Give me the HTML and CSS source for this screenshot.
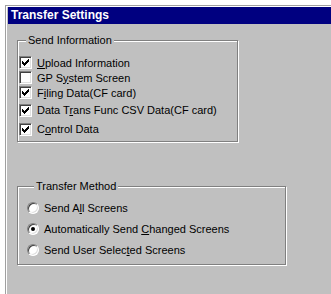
FILE: index.html
```html
<!doctype html>
<html>

<head>
   <meta charset="utf-8">
   <title>Transfer Settings</title>
   <link rel="stylesheet" href="styles.css">
</head>

<body>

   <div class="window">
      <div class="titleBar">Transfer Settings</div>

      <fieldset class="group sendInfo">
         <legend>Send Information</legend>
         <div class="checkRow">
            <span class="check on"><svg width="7" height="7" viewBox="0 0 7 7"><path d="M6 0h1v1h-1zM5 1h2v1h-2zM0 2h1v1h-1zM4 2h3v1h-3zM0 3h2v1h-2zM3 3h3v1h-3zM0 4h5v1h-5zM1 5h3v1h-3zM2 6h1v1h-1z"/></svg></span>
            <span><u>U</u>pload Information</span>
         </div>
         <div class="checkRow">
            <span class="check"></span>
            <span>GP S<u>y</u>stem Screen</span>
         </div>
         <div class="checkRow">
            <span class="check on"><svg width="7" height="7" viewBox="0 0 7 7"><path d="M6 0h1v1h-1zM5 1h2v1h-2zM0 2h1v1h-1zM4 2h3v1h-3zM0 3h2v1h-2zM3 3h3v1h-3zM0 4h5v1h-5zM1 5h3v1h-3zM2 6h1v1h-1z"/></svg></span>
            <span>F<u>i</u>ling Data(CF card)</span>
         </div>
         <div class="checkRow tall">
            <span class="check on"><svg width="7" height="7" viewBox="0 0 7 7"><path d="M6 0h1v1h-1zM5 1h2v1h-2zM0 2h1v1h-1zM4 2h3v1h-3zM0 3h2v1h-2zM3 3h3v1h-3zM0 4h5v1h-5zM1 5h3v1h-3zM2 6h1v1h-1z"/></svg></span>
            <span>Data T<u>r</u>ans Func CSV Data(CF card)</span>
         </div>
         <div class="checkRow tall">
            <span class="check on"><svg width="7" height="7" viewBox="0 0 7 7"><path d="M6 0h1v1h-1zM5 1h2v1h-2zM0 2h1v1h-1zM4 2h3v1h-3zM0 3h2v1h-2zM3 3h3v1h-3zM0 4h5v1h-5zM1 5h3v1h-3zM2 6h1v1h-1z"/></svg></span>
            <span>C<u>o</u>ntrol Data</span>
         </div>
      </fieldset>

      <fieldset class="group method">
         <legend>Transfer Method</legend>
         <div class="radioRow">
            <span class="radio"></span>
            <span>Send A<u>l</u>l Screens</span>
         </div>
         <div class="radioRow">
            <span class="radio on"></span>
            <span>Automatically Send <u>C</u>hanged Screens</span>
         </div>
         <div class="radioRow">
            <span class="radio"></span>
            <span>Send User Selec<u>t</u>ed Screens</span>
         </div>
      </fieldset>
   </div>

</body>

</html>
```

FILE: styles.css
```css
html,
body {
   margin: 0;
   padding: 0;
   background: #FFF;
   font-family: "Liberation Sans", Arial, sans-serif;
   font-size: 11px;
   color: #000;
}

.window {
   box-sizing: border-box;
   min-height: calc(100vh - 5px);
   margin: 5px 0 0 5px;
   padding: 1px 0 0 2px;
   border-top: 1px solid #A0A0A0;
   border-left: 1px solid #A0A0A0;
   box-shadow: inset 1px 1px 0 #FFF;
   background: #C0C0C0;
   overflow: hidden;
}

.titleBar {
   height: 17px;
   line-height: 17px;
   padding-left: 3px;
   background: #000080;
   color: #FFF;
   font-size: 12px;
   font-weight: bold;
}

/* etched group boxes */
.group {
   box-sizing: border-box;
   margin: 0 0 0 9px;
   padding: 0;
   border: 1px solid #808080;
   box-shadow: 1px 1px 0 #FFF, inset 1px 1px 0 #FFF;
}

.group legend {
   margin-left: 7px;
   padding: 0 2px;
   line-height: 14px;
   background: #C0C0C0;
}

.sendInfo {
   width: 221px;
   margin-top: 9px;
   padding: 8px 0 3px 1px;
}

.method {
   width: 269px;
   margin-top: 37px;
   padding: 4px 0 4px 9px;
}

.checkRow {
   display: flex;
   align-items: center;
   gap: 5px;
   height: 15px;
}

.checkRow.tall {
   height: 18px;
   margin-top: 1px;
}

.check {
   box-sizing: border-box;
   display: flex;
   align-items: center;
   justify-content: center;
   width: 13px;
   height: 13px;
   border: 1px solid;
   border-color: #808080 #FFF #FFF #808080;
   box-shadow: inset 1px 1px 0 #404040, inset -1px -1px 0 #DFDFDF;
   background: #FFF;
}

.check svg {
   display: block;
   fill: #000;
   shape-rendering: crispEdges;
}

.radioRow {
   display: flex;
   align-items: center;
   gap: 5px;
   height: 21px;
}

.radio {
   box-sizing: border-box;
   position: relative;
   width: 12px;
   height: 12px;
   border-radius: 50%;
   border: 1px solid;
   border-color: #808080 #FFF #FFF #808080;
   box-shadow: inset 1px 1px 0 #404040, inset -1px -1px 0 #DFDFDF;
   background: #FFF;
}

.radio.on::after {
   content: "";
   position: absolute;
   top: 3px;
   left: 3px;
   width: 4px;
   height: 4px;
   border-radius: 50%;
   background: #000;
}
```
